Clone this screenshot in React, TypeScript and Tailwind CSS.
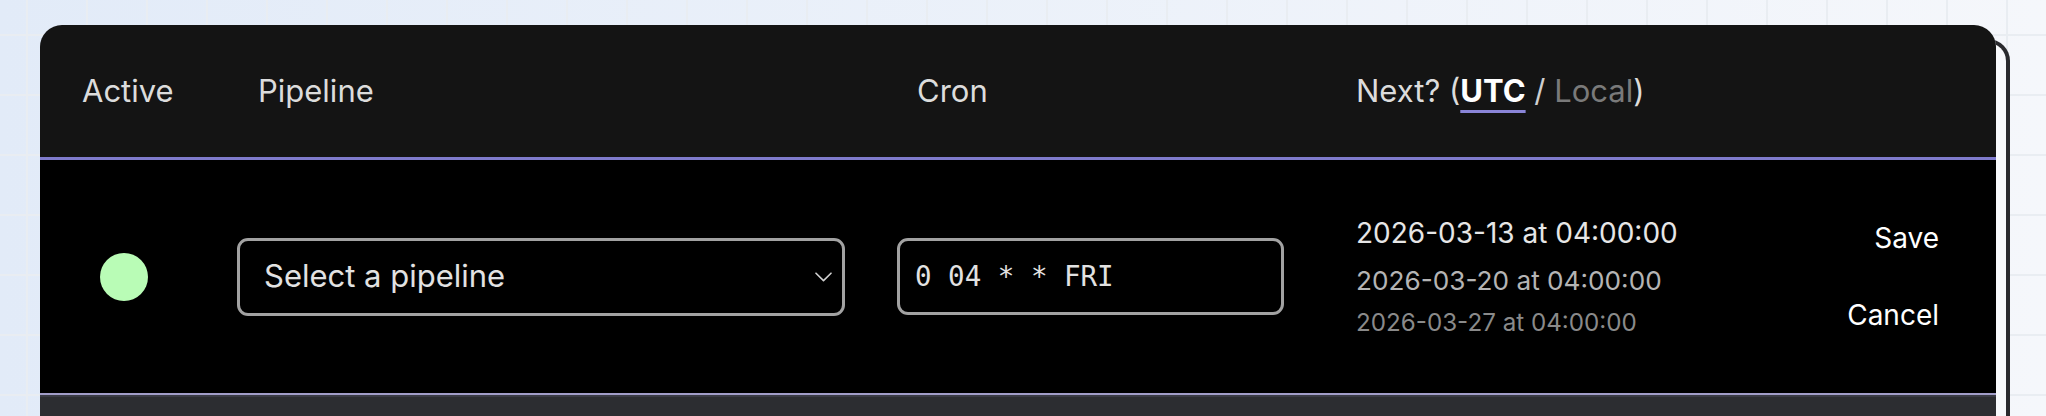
import React from "react";

const DATES = [
  { text: "2026-03-13 at 04:00:00", cls: "text-[28px] leading-[34px] text-[#e6e6e6]" },
  { text: "2026-03-20 at 04:00:00", cls: "mt-[14px] text-[26.2px] leading-[34px] text-[#b4b4b4]" },
  { text: "2026-03-27 at 04:00:00", cls: "mt-[10px] text-[24.2px] leading-[30px] text-[#8a8a8a]" },
];

function Chevron() {
  return (
    <svg width="17" height="10" viewBox="0 0 17 10" fill="none" className="shrink-0">
      <path d="M1 1.2 8.5 8.6 16 1.2" stroke="#d0d0d0" strokeWidth="1.6" strokeLinecap="round" strokeLinejoin="round" />
    </svg>
  );
}

export default function App() {
  return (
    <div className="h-[416px] w-full overflow-hidden bg-[linear-gradient(to_right,#e9edf2_2px,transparent_2px),linear-gradient(to_bottom,#e9edf2_2px,transparent_2px),linear-gradient(to_right,#e2ebf8,#f5f7fb)] bg-[size:60px_60px,60px_60px,100%_100%] bg-[position:26px_34px,26px_34px,0_0] pl-[40px] pt-[25px] font-['Inter',sans-serif]">
      <div className="w-[1956px] rounded-[22px] shadow-[14px_14px_0_-4px_#f8f9fc,14px_14px_0_0_#2a2a2e]">
        <div className="overflow-hidden rounded-[22px]">
          {/* header */}
          <div className="grid h-[132px] grid-cols-[176px_659px_439px_1fr] items-center bg-[#141414] pl-[42px] pr-[57px] text-[31px] text-[#dcdcdc]">
            <div>Active</div>
            <div>Pipeline</div>
            <div>Cron</div>
            <div>
              Next? (
              <span className="font-bold text-white underline decoration-[#8a85d8] decoration-[3px] underline-offset-[8px]">UTC</span>
              <span className="text-[#cfcfcf]"> / </span>
              <span className="text-[#7a7a7a]">Local</span>)
            </div>
          </div>
          <div className="h-[3px] bg-[#7f7bcc]" />

          {/* row */}
          <div className="grid h-[233px] grid-cols-[176px_659px_439px_1fr] items-center bg-black pl-[42px] pr-[57px]">
            <div>
              <div className="ml-[18px] h-[48px] w-[48px] rounded-full bg-[#b9fcb6]" />
            </div>
            <div>
              <div className="-ml-[21px] flex h-[78px] w-[608px] items-center justify-between rounded-[11px] border-[3px] border-[#a2a2a2] bg-black pl-[24px] pr-[10px] text-[31px] text-[#e2e2e2]">
                <span>Select a pipeline</span>
                <Chevron />
              </div>
            </div>
            <div>
              <div className="-ml-[20px] flex h-[77px] w-[387px] items-center rounded-[11px] border-[3px] border-[#a2a2a2] bg-black pl-[15px] font-['DejaVu_Sans_Mono',monospace] text-[27.5px] text-[#e2e2e2]">
                0 04 * * FRI
              </div>
            </div>
            <div className="flex items-center justify-between">
              <div className="flex flex-col">
                {DATES.map((d) => (
                  <div key={d.text} className={d.cls}>
                    {d.text}
                  </div>
                ))}
              </div>
              <div className="flex flex-col items-end gap-[43px] text-[28px] leading-[34px] text-white">
                <button type="button">Save</button>
                <button type="button">Cancel</button>
              </div>
            </div>
          </div>
          <div className="h-[2px] bg-[#a19dc8]" />
          <div className="h-[2px] bg-[#3a3b44]" />
          <div className="h-[80px] bg-[#2c2d31]" />
        </div>
      </div>
    </div>
  );
}
